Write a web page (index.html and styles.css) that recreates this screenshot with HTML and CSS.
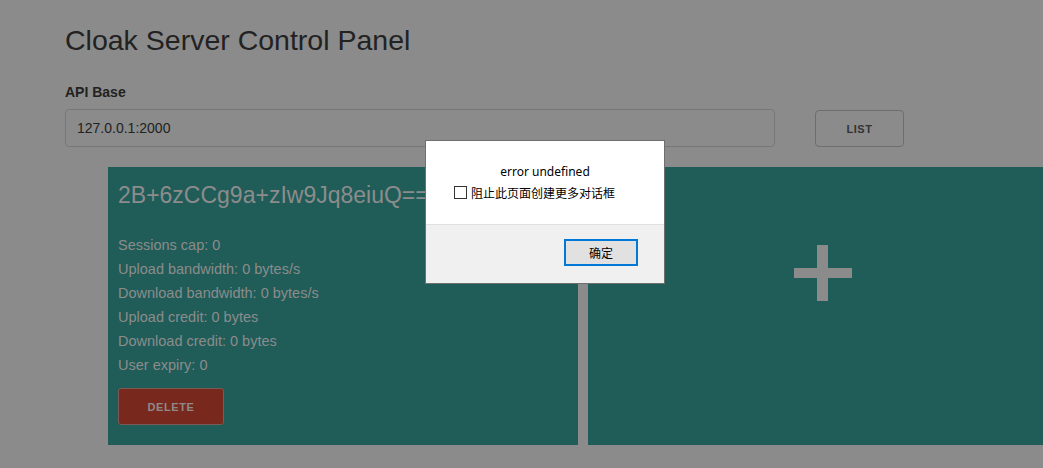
FILE: index.html
```html
<!DOCTYPE html>
<html lang="en">
<head>
    <meta charset="UTF-8">
    <meta name="viewport" content="width=device-width, initial-scale=1.0">
    <title>Cloak Server Control Panel</title>
    <link rel="stylesheet" href="styles.css">
</head>
<body>
    <div class="page">
        <h1>Cloak Server Control Panel</h1>

        <!-- API base -->
        <label class="field-label" for="api-base">API Base</label>
        <div class="api-row">
            <input id="api-base" class="api-input" type="text" value="127.0.0.1:2000">
            <button class="list-button">LIST</button>
        </div>

        <!-- Users -->
        <div class="cards">
            <div class="card">
                <div class="card-title">2B+6zCCg9a+zIw9Jq8eiuQ==</div>
                <div class="stats">
                    <div>Sessions cap: 0</div>
                    <div>Upload bandwidth: 0 bytes/s</div>
                    <div>Download bandwidth: 0 bytes/s</div>
                    <div>Upload credit: 0 bytes</div>
                    <div>Download credit: 0 bytes</div>
                    <div>User expiry: 0</div>
                </div>
                <button class="delete-button">DELETE</button>
            </div>
            <div class="card card-add">
                <svg class="plus" width="58" height="56" viewBox="0 0 58 56">
                    <rect x="23" y="0" width="11" height="56" fill="#8b8b8b"/>
                    <rect x="0" y="23" width="58" height="10" fill="#8b8b8b"/>
                </svg>
            </div>
        </div>
    </div>

    <!-- Alert -->
    <div class="dialog">
        <div class="dialog-body">
            <div class="dialog-message">error undefined</div>
            <label class="dialog-check">
                <span class="box"></span>
                阻止此页面创建更多对话框
            </label>
        </div>
        <div class="dialog-footer">
            <button class="ok-button">确定</button>
        </div>
    </div>
</body>
</html>
```

FILE: styles.css
```css
body {
    margin: 0;
    font-family: "Liberation Sans", Arial, sans-serif;
    background-color: #8b8b8b;
    color: #222;
    overflow: hidden;
}
.page {
    padding: 22px 0 0 65px;
}
h1 {
    margin: 0;
    font-size: 28.5px;
    font-weight: normal;
    line-height: 36px;
    color: #222;
}
.field-label {
    display: block;
    margin-top: 24px;
    font-size: 14px;
    font-weight: bold;
    line-height: 20px;
    color: #222;
}
.api-row {
    display: flex;
    align-items: flex-start;
    margin-top: 7px;
}
.api-input {
    box-sizing: border-box;
    width: 710px;
    height: 38px;
    padding: 0 11px;
    border: 1px solid #777;
    border-radius: 4px;
    background: #8b8b8b;
    font-family: "Liberation Sans", Arial, sans-serif;
    font-size: 14px;
    color: #222;
    outline: none;
}
.list-button {
    box-sizing: border-box;
    width: 89px;
    height: 37px;
    margin: 1px 0 0 40px;
    border: 1px solid #6e6e6e;
    border-radius: 4px;
    background: #8b8b8b;
    font-family: "Liberation Sans", Arial, sans-serif;
    font-size: 11px;
    font-weight: bold;
    letter-spacing: 0.6px;
    color: #333;
}
.cards {
    display: flex;
    gap: 10px;
    margin: 20px 0 0 43px;
}
.card {
    box-sizing: border-box;
    flex: 0 0 470px;
    height: 278px;
    padding: 10px 10px 21px;
    background-color: #205c58;
    color: #8c8c8c;
}
.card-title {
    margin-top: 3px;
    font-size: 23px;
    line-height: 30px;
    white-space: nowrap;
}
.stats {
    margin-top: 23px;
    font-size: 14.5px;
    line-height: 24px;
}
.delete-button {
    box-sizing: border-box;
    width: 106px;
    height: 37px;
    margin-top: 11px;
    border: 1px solid #7a5a52;
    border-radius: 3px;
    background-color: #78281d;
    font-family: "Liberation Sans", Arial, sans-serif;
    font-size: 11px;
    font-weight: bold;
    letter-spacing: 0.6px;
    color: #8e8a88;
}
.card-add {
    display: flex;
    justify-content: center;
    padding-top: 78px;
}
.plus {
    display: block;
}
/* Alert box */
.dialog {
    position: absolute;
    top: 140px;
    left: 425px;
    box-sizing: border-box;
    width: 240px;
    height: 144px;
    border: 1px solid #6f6f6f;
    background: #f0f0f0;
    font-family: "Noto Sans", "Noto Sans CJK SC", sans-serif;
    font-size: 12px;
    color: #000;
    display: flex;
    flex-direction: column;
}
.dialog-body {
    height: 84px;
    background: #fff;
    border-bottom: 1px solid #dfdfdf;
    padding-top: 22px;
    box-sizing: border-box;
}
.dialog-message {
    text-align: center;
    line-height: 17px;
}
.dialog-check {
    display: flex;
    align-items: center;
    gap: 4px;
    margin: 4px 0 0 28px;
    line-height: 17px;
    font-family: "Noto Sans CJK SC", sans-serif;
}
.box {
    box-sizing: border-box;
    width: 13px;
    height: 13px;
    border: 1px solid #333;
    background: #fff;
}
.dialog-footer {
    display: flex;
    justify-content: flex-end;
    padding: 14px 26px 0 0;
}
.ok-button {
    box-sizing: border-box;
    width: 74px;
    height: 27px;
    border: 2px solid #0078d7;
    background: #e1e1e1;
    font-family: "Noto Sans CJK SC", sans-serif;
    font-size: 12px;
    color: #000;
    padding: 0;
}
```
